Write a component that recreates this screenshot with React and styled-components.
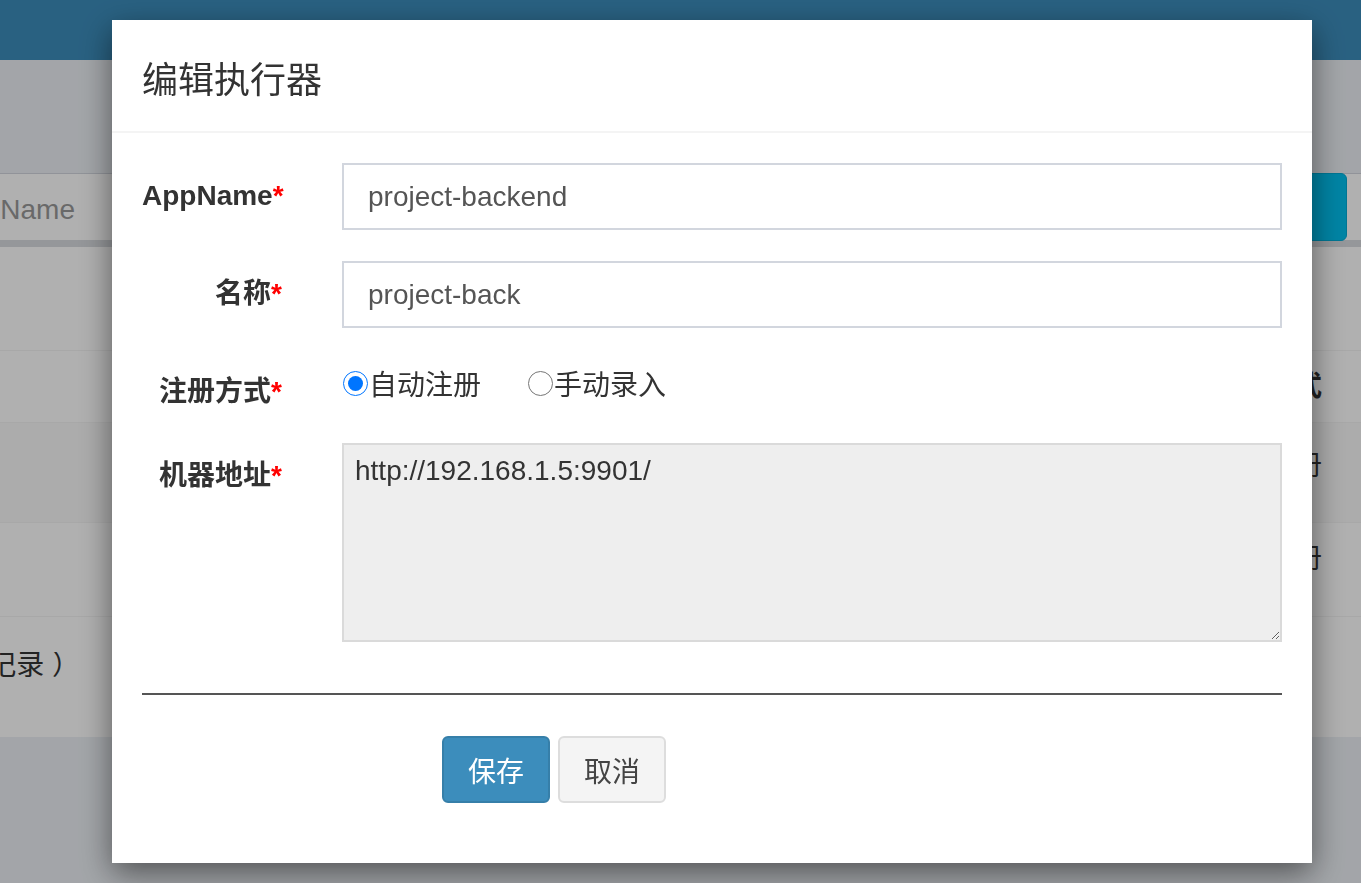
import React from 'react';
import styled, { createGlobalStyle } from "styled-components";

const GlobalStyle = createGlobalStyle`
html, body {
  margin: 0;
  height: 100%;
  overflow: hidden;
}
body {
  font-family: "Liberation Sans", "Noto Sans CJK SC", sans-serif;
  background: #ecf0f5;
  color: #333;
}
`;

// page under the backdrop
const TopBar = styled.div`
height: 60px;
background: #3c8dbc;
`;

const Content = styled.div`
padding-top: 113px;
`;

const SearchBox = styled.div`
height: 66px;
background: #fff;
border-top: 1px solid #d2d6de;
border-bottom: 7px solid #d8dbdf;
display: flex;
justify-content: space-between;
align-items: center;
`;

// clipped on the left, like text running off the window edge
const Clip = styled.div`
width: ${p => p.$w}px;
overflow: hidden;
display: flex;
justify-content: flex-end;
white-space: nowrap;
color: ${p => p.$color || "inherit"};
font-size: 28px;
`;

const SearchButton = styled.div`
align-self: flex-start;
margin-top: -1px;
width: 160px;
height: 66px;
margin-right: 14px;
background: #00c0ef;
border: 1px solid #00acd6;
border-radius: 6px;
`;

const TableBox = styled.div`
background: #fff;
`;

const Row = styled.div`
height: ${p => p.$h}px;
box-sizing: border-box;
border-top: ${p => (p.$first ? "none" : "1px solid #f4f4f4")};
background: ${p => (p.$striped ? "#f9f9f9" : "#fff")};
display: flex;
justify-content: space-between;
align-items: flex-start;
padding-top: ${p => p.$pad || 0}px;
padding-right: 39px;
font-size: 28px;
line-height: 28px;
`;

const CellText = styled.div`
margin-left: auto;
font-weight: ${p => (p.$bold ? 700 : 400)};
white-space: nowrap;
`;

// modal
const Backdrop = styled.div`
position: fixed;
inset: 0;
background: rgba(0, 0, 0, 0.31);
`;

const Modal = styled.div`
width: 1200px;
margin: 20px 0 0 112px;
background: #fff;
box-shadow: 0 10px 30px rgba(0, 0, 0, 0.5);
`;

const ModalHeader = styled.div`
padding: 32px 30px 28px;
border-bottom: 2px solid #f4f4f4;
`;

const Title = styled.h4`
margin: 0;
font-size: 36px;
line-height: 51px;
font-weight: 400;
color: #333;
font-family: "Noto Sans CJK SC", "Liberation Sans", sans-serif;
`;

const ModalBody = styled.div`
padding: 30px 30px 60px;
`;

const FormGroup = styled.div`
display: grid;
grid-template-columns: 140px 940px;
column-gap: 60px;
margin-bottom: ${p => (p.$last ? 0 : 31)}px;
`;

const Label = styled.label`
padding-top: 13px;
line-height: 40px;
text-align: right;
font-size: 28px;
font-weight: 700;
color: #333;
white-space: nowrap;
`;

const Star = styled.span`
color: #f00;
`;

const TextInput = styled.input`
box-sizing: border-box;
width: 100%;
height: 67px;
border: 2px solid #d2d6de;
padding: 0 24px;
font-family: "Liberation Sans", "Noto Sans CJK SC", sans-serif;
font-size: 28px;
color: #555;
outline: none;
`;

const RadioRow = styled.div`
display: flex;
align-items: center;
padding-top: 10px;
height: 28px;
`;

const RadioItem = styled.label`
display: flex;
align-items: center;
font-size: 28px;
line-height: 28px;
color: #333;
margin-left: ${p => (p.$first ? 0 : 46)}px;
font-family: "Noto Sans CJK SC", "Liberation Sans", sans-serif;

input {
  width: 25px;
  height: 25px;
  margin: 0 1px;
}
`;

const Area = styled.textarea`
box-sizing: border-box;
width: 100%;
height: 199px;
background: #eee;
border: 2px solid #dadada;
padding: 8px 11px;
font-family: "Liberation Sans", "Noto Sans CJK SC", sans-serif;
font-size: 28px;
line-height: 36px;
color: #333;
outline: none;
`;

const Divider = styled.div`
height: 2px;
margin-top: 51px;
background: #555;
`;

const Actions = styled.div`
display: flex;
gap: 8px;
margin: 41px 0 0 300px;
`;

const Button = styled.button`
height: 67px;
padding: 0 24px;
border-radius: 6px;
border: 2px solid ${p => (p.$primary ? "#367fa9" : "#ddd")};
background: ${p => (p.$primary ? "#3c8dbc" : "#f4f4f4")};
color: ${p => (p.$primary ? "#fff" : "#444")};
font-size: 28px;
font-family: "Noto Sans CJK SC", "Liberation Sans", sans-serif;
cursor: pointer;
`;

const App = () => {
    return (
        <>
            <GlobalStyle />
            <TopBar />
            <Content>
                <SearchBox>
                    <Clip $w={75} $color="#999">请输入AppName</Clip>
                    <SearchButton />
                </SearchBox>
                <TableBox>
                    <Row $h={103} $first />
                    <Row $h={72} $pad={22}>
                        <CellText $bold>注册方式</CellText>
                    </Row>
                    <Row $h={100} $striped $pad={29}>
                        <CellText>自动注册</CellText>
                    </Row>
                    <Row $h={94} $pad={22}>
                        <CellText>自动注册</CellText>
                    </Row>
                    <Row $h={121} $pad={35}>
                        <Clip $w={80}>共 2 条记录 ）</Clip>
                    </Row>
                </TableBox>
            </Content>

            <Backdrop>
                <Modal>
                    <ModalHeader>
                        <Title>编辑执行器</Title>
                    </ModalHeader>
                    <ModalBody>
                        <FormGroup>
                            <Label>AppName<Star>*</Star></Label>
                            <TextInput defaultValue="project-backend" />
                        </FormGroup>
                        <FormGroup>
                            <Label>名称<Star>*</Star></Label>
                            <TextInput defaultValue="project-back" />
                        </FormGroup>
                        <FormGroup>
                            <Label>注册方式<Star>*</Star></Label>
                            <RadioRow>
                                <RadioItem $first>
                                    <input type="radio" name="addressType" defaultChecked />自动注册
                                </RadioItem>
                                <RadioItem>
                                    <input type="radio" name="addressType" />手动录入
                                </RadioItem>
                            </RadioRow>
                        </FormGroup>
                        <FormGroup $last>
                            <Label>机器地址<Star>*</Star></Label>
                            <Area readOnly defaultValue="http://192.168.1.5:9901/" />
                        </FormGroup>
                        <Divider />
                        <Actions>
                            <Button $primary>保存</Button>
                            <Button>取消</Button>
                        </Actions>
                    </ModalBody>
                </Modal>
            </Backdrop>
        </>
    )
};

export default App;
